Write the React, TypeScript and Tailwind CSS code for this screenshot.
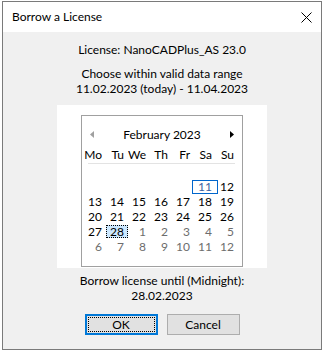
const FONT = "font-['Lato','Liberation_Sans',sans-serif]";

type Day = { n: number; muted?: boolean; hidden?: boolean; today?: boolean; selected?: boolean };

const WEEKDAYS = ['Mo', 'Tu', 'We', 'Th', 'Fr', 'Sa', 'Su'];

function buildRows(): Day[][] {
  const rows: Day[][] = [];
  // first row: 30, 31, 1..5 — all before today, hidden
  rows.push([30, 31, 1, 2, 3, 4, 5].map((n) => ({ n, hidden: true })));
  rows.push([6, 7, 8, 9, 10, 11, 12].map((n) => ({ n, hidden: n < 11, today: n === 11 })));
  rows.push([13, 14, 15, 16, 17, 18, 19].map((n) => ({ n })));
  rows.push([20, 21, 22, 23, 24, 25, 26].map((n) => ({ n })));
  rows.push([27, 28, 1, 2, 3, 4, 5].map((n, i) => ({ n, muted: i > 1, selected: n === 28 && i === 1 })));
  rows.push([6, 7, 8, 9, 10, 11, 12].map((n) => ({ n, muted: true })));
  return rows;
}

function DayCell({ day }: { day: Day }) {
  if (day.hidden) return <div className="h-[15px]" />;
  return (
    <div className="flex h-[15px] items-center justify-end pr-[2px] leading-none">
      {day.today ? (
        <span className="mr-[-6px] flex h-[14px] items-center border border-[#0066cc] px-[5px] text-[#3d5f9e]">{day.n}</span>
      ) : day.selected ? (
        <span className="mr-[-4px] flex h-[13px] items-center border border-dotted border-black bg-[#cce8ff] px-[3px] text-black">
          {day.n}
        </span>
      ) : (
        <span className={day.muted ? 'text-[#6d6d6d]' : 'text-black'}>{day.n}</span>
      )}
    </div>
  );
}

function Calendar() {
  const rows = buildRows();
  return (
    <div className="flex h-[152px] w-[162px] flex-col border border-[#a0a0a0] bg-white">
      <div className="mt-[8px] flex h-[20px] items-center justify-between px-[8px]">
        <svg width="4" height="7" viewBox="0 0 4 7">
          <path d="M4 0 L0 3.5 L4 7 Z" fill="#a0a0a0" />
        </svg>
        <span className="text-[12px] text-black">February 2023</span>
        <svg width="4" height="7" viewBox="0 0 4 7">
          <path d="M0 0 L4 3.5 L0 7 Z" fill="#000" />
        </svg>
      </div>
      <div className="mt-[2px] grid h-[17px] grid-cols-[repeat(7,22px)] items-center">
        {WEEKDAYS.map((d) => (
          <div key={d} className="pr-[2px] text-right text-black">
            {d}
          </div>
        ))}
      </div>
      <div className="ml-[6px] h-px w-[147px] bg-[#e3e3e3]" />
      <div className="grid grid-cols-[repeat(7,22px)]">
        {rows.map((row, r) => row.map((d, c) => <DayCell key={`${r}-${c}`} day={d} />))}
      </div>
    </div>
  );
}

export default function App() {
  return (
    <div className={`h-[352px] w-[324px] bg-white pl-[2px] pt-[1px] text-[12px] ${FONT}`}>
      <div className="flex h-[349px] w-[320px] flex-col border border-[#7a7a7a] bg-[#f0f0f0]">
        <div className="flex h-[30px] shrink-0 items-center justify-between bg-white pl-[9px] pr-[8px]">
          <span className="text-black">Borrow a License</span>
          <svg width="11" height="11" viewBox="0 0 11 11" className="mr-[1px]">
            <path d="M0.5 0.5 L10.5 10.5 M10.5 0.5 L0.5 10.5" stroke="#000" strokeWidth="1" />
          </svg>
        </div>

        <div className="flex flex-col items-center pt-[10px] leading-[15px] text-black">
          <p>License: NanoCADPlus_AS 23.0</p>
          <p className="mt-[9px]">Choose within valid data range</p>
          <p>11.02.2023 (today) - 11.04.2023</p>

          <div className="mt-[9px] flex h-[163px] w-[210px] justify-center bg-white pt-[10px]">
            <Calendar />
          </div>

          <p className="mt-[5px]">Borrow license until (Midnight):</p>
          <p>28.02.2023</p>

          <div className="mt-[11px] flex gap-[9px]">
            <button className="flex h-[21px] w-[73px] items-center justify-center border-2 border-[#0078d7] bg-[#e1e1e1] p-px">
              <span className="flex h-full w-full items-center justify-center border border-dotted border-black">OK</span>
            </button>
            <button className="flex h-[21px] w-[73px] items-center justify-center border border-[#adadad] bg-[#e1e1e1]">
              Cancel
            </button>
          </div>
        </div>
      </div>
    </div>
  );
}
